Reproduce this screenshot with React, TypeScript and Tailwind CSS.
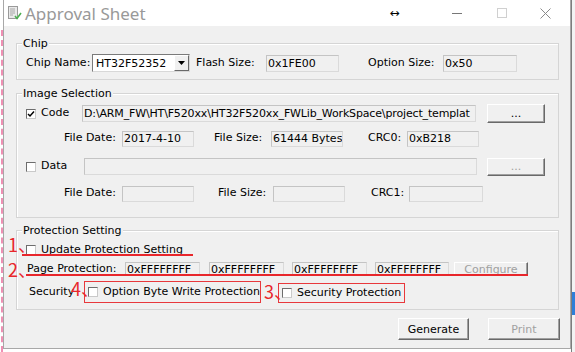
import React from "react";

function Check({ checked = false }: { checked?: boolean }) {
  return (
    <span className="w-[10px] h-[10px] shrink-0 bg-white border border-t-[#6d6d6d] border-l-[#6d6d6d] border-r-[#c9c9c9] border-b-[#c9c9c9] flex items-center justify-center">
      {checked && (
        <svg width="8" height="8" viewBox="0 0 8 8">
          <path d="M1 4 L3 6 L7 1.5" fill="none" stroke="#000" strokeWidth="1.5" />
        </svg>
      )}
    </span>
  );
}

function Field({ className, text }: { className: string; text?: string }) {
  return (
    <div
      className={
        "shrink-0 border border-t-[#c4c4c4] border-l-[#c4c4c4] border-r-[#dadada] border-b-[#dadada] bg-[#f0f0f0] flex items-center pl-[1px] overflow-hidden whitespace-nowrap leading-none " +
        className
      }
    >
      {text}
    </div>
  );
}

function Btn({ className, text, disabled = false }: { className: string; text: string; disabled?: boolean }) {
  return (
    <div
      className={
        "shrink-0 flex items-center justify-center bg-[#f0f0f0] border border-t-white border-l-white border-r-[#696969] border-b-[#696969] shadow-[inset_-1px_-1px_0_#a0a0a0] leading-none " +
        (disabled ? "text-[#a0a0a0] " : "text-black ") +
        className
      }
    >
      {text}
    </div>
  );
}

function Group({ title, className, children }: { title: string; className: string; children: React.ReactNode }) {
  return (
    <div className={"relative border border-[#d5d5d5] shadow-[inset_1px_1px_0_#ffffff] " + className}>
      <span className="absolute -top-[7px] left-[5px] px-[1px] bg-[#f0f0f0] leading-[14px]">{title}</span>
      {children}
    </div>
  );
}

export default function App() {
  return (
    <div className="w-[575px] h-[352px] bg-white relative overflow-hidden flex text-[11px] text-black font-['DejaVu_Sans',sans-serif]">
      {/* left desktop strip */}
      <div className="w-[3px] h-full pl-[1px] pt-[30px]">
        <div className="h-full border-l-2 border-dashed border-[#ef8fb3]" />
      </div>

      {/* window */}
      <div className="w-[568px] h-[349px] flex flex-col border-l border-r border-b border-[#a8a8a8]">
        {/* title bar */}
        <div className="h-[26px] bg-white flex items-center shrink-0">
          <svg className="ml-[4px]" width="14" height="14" viewBox="0 0 14 14">
            <rect x="0.5" y="0.5" width="9" height="12" fill="#e9e9e9" stroke="#9a9a9a" />
            <path d="M2 3h5M2 5h5M2 7h5M2 9h3" stroke="#a8a8a8" strokeWidth="1" />
            <path d="M7 10 L9 12.5 L13 7" fill="none" stroke="#4caf50" strokeWidth="1.6" />
          </svg>
          <span className="ml-[3px] text-[17px] text-[#999999] font-['Noto_Sans',sans-serif] leading-none">Approval Sheet</span>
          <span className="ml-[244px] text-[12px] text-black leading-none">↔</span>
          <span className="ml-[52px] w-[10px] h-[1px] bg-[#777]" />
          <span className="ml-[35px] w-[10px] h-[10px] border border-[#d0d0d0]" />
          <svg className="ml-[33px]" width="11" height="11" viewBox="0 0 11 11">
            <path d="M0.5 0.5 L10.5 10.5 M10.5 0.5 L0.5 10.5" stroke="#8a8a8a" strokeWidth="1" />
          </svg>
        </div>

        {/* client area */}
        <div className="flex-1 bg-[#f0f0f0] pt-[17px] pl-[12px] pr-[11px] flex flex-col">
          {/* Chip */}
          <Group title="Chip" className="h-[37px] shrink-0">
            <div className="flex items-center pt-[10px] pl-[9px] h-[28px]">
              <span className="w-[66px] shrink-0">Chip Name:</span>
              <div className="w-[98px] h-[18px] shrink-0 bg-white border border-t-[#7a7a7a] border-l-[#7a7a7a] border-r-[#d8d8d8] border-b-[#d8d8d8] flex items-center">
                <span className="flex-1 pl-[3px] leading-none">HT32F52352</span>
                <div className="w-[15px] h-[16px] bg-[#f0f0f0] border border-t-white border-l-white border-r-[#696969] border-b-[#696969] flex items-center justify-center">
                  <svg width="7" height="4" viewBox="0 0 7 4">
                    <path d="M0 0 H7 L3.5 4 Z" fill="#000" />
                  </svg>
                </div>
              </div>
              <span className="ml-[6px] w-[70px] shrink-0">Flash Size:</span>
              <Field className="w-[73px] h-[17px]" text="0x1FE00" />
              <span className="ml-[29px] w-[75px] shrink-0">Option Size:</span>
              <Field className="w-[74px] h-[17px]" text="0x50" />
            </div>
          </Group>

          {/* Image Selection */}
          <Group title="Image Selection" className="mt-[13px] h-[125px] shrink-0">
            <div className="flex items-center pl-[9px] mt-[10px] h-[19px]">
              <Check checked />
              <span className="ml-[5px] w-[41px] shrink-0">Code</span>
              <Field className="w-[394px] h-[17px] tracking-[-0.15px]" text="D:\ARM_FW\HT\F520xx\HT32F520xx_FWLib_WorkSpace\project_templat" />
              <Btn className="ml-[11px] w-[58px] h-[19px]" text="..." />
            </div>
            <div className="flex items-center pl-[47px] mt-[6px] h-[19px]">
              <span className="w-[58px] shrink-0">File Date:</span>
              <Field className="w-[72px] h-[16px]" text="2017-4-10" />
              <span className="ml-[20px] w-[57px] shrink-0">File Size:</span>
              <Field className="w-[72px] h-[16px]" text="61444 Bytes" />
              <span className="ml-[25px] w-[39px] shrink-0">CRC0:</span>
              <Field className="w-[72px] h-[16px]" text="0xB218" />
            </div>
            <div className="flex items-center pl-[9px] mt-[9px] h-[19px]">
              <Check />
              <span className="ml-[5px] w-[43px] shrink-0">Data</span>
              <Field className="w-[393px] h-[17px]" />
              <Btn className="ml-[10px] w-[58px] h-[18px]" text="..." disabled />
            </div>
            <div className="flex items-center pl-[47px] mt-[8px] h-[19px]">
              <span className="w-[58px] shrink-0">File Date:</span>
              <Field className="w-[72px] h-[16px]" />
              <span className="ml-[24px] w-[55px] shrink-0">File Size:</span>
              <Field className="w-[72px] h-[16px]" />
              <span className="ml-[26px] w-[38px] shrink-0">CRC1:</span>
              <Field className="w-[74px] h-[16px]" />
            </div>
          </Group>

          {/* Protection Setting */}
          <Group title="Protection Setting" className="mt-[12px] h-[80px] shrink-0">
            <div className="flex items-center pl-[9px] mt-[12px] h-[14px]">
              <Check />
              <span className="ml-[5px]">Update Protection Setting</span>
            </div>
            <div className="flex items-center pl-[10px] mt-[5px] h-[14px]">
              <span className="w-[98px] shrink-0">Page Protection:</span>
              <Field className="w-[75px] h-[14px]" text="0xFFFFFFFF" />
              <Field className="ml-[9px] w-[75px] h-[14px]" text="0xFFFFFFFF" />
              <Field className="ml-[8px] w-[75px] h-[14px]" text="0xFFFFFFFF" />
              <Field className="ml-[8px] w-[74px] h-[14px]" text="0xFFFFFFFF" />
              <Btn className="ml-[5px] w-[74px] h-[14px]" text="Configure" disabled />
            </div>
            <div className="flex items-end pl-[12px] mt-[5px] h-[22px]">
              <span className="w-[55px] shrink-0 self-center">Security</span>
              <div className="w-[177px] h-[22px] border border-[#e8383c] flex items-center pl-[3px]">
                <Check />
                <span className="ml-[5px] whitespace-nowrap">Option Byte Write Protection</span>
              </div>
              <div className="ml-[17px] w-[127px] h-[20px] border border-[#e8383c] flex items-center pl-[3px]">
                <Check />
                <span className="ml-[5px] whitespace-nowrap">Security Protection</span>
              </div>
            </div>
          </Group>

          {/* buttons */}
          <div className="flex justify-end mt-[8px] mr-[-1px] gap-[19px]">
            <Btn className="w-[71px] h-[22px]" text="Generate" />
            <Btn className="w-[72px] h-[22px]" text="Print" disabled />
          </div>
        </div>
      </div>

      {/* right desktop strip */}
      <div className="w-[4px] h-full flex flex-col bg-[#f3f3f3] border-l border-[#7d7d7d]">
        <div className="h-[292px]" />
        <div className="h-[23px] bg-[#2f7fd8]" />
      </div>

      {/* red annotations */}
      <span className="absolute left-[8px] top-[235px] text-[18px] leading-none text-[#e8262b] font-['Noto_Sans_CJK_SC',sans-serif]">1、</span>
      <span className="absolute left-[8px] top-[260px] text-[18px] leading-none text-[#e8262b] font-['Noto_Sans_CJK_SC',sans-serif]">2、</span>
      <span className="absolute left-[71px] top-[279px] text-[18px] leading-none text-[#e8262b] font-['Noto_Sans_CJK_SC',sans-serif]">4、</span>
      <span className="absolute left-[264px] top-[282px] text-[18px] leading-none text-[#e8262b] font-['Noto_Sans_CJK_SC',sans-serif]">3、</span>
      <div className="absolute left-[22px] top-[254px] w-[171px] h-[2px] bg-[#e8262b]" />
      <div className="absolute left-[26px] top-[274px] w-[502px] h-[2px] bg-[#e8262b]" />
    </div>
  );
}
